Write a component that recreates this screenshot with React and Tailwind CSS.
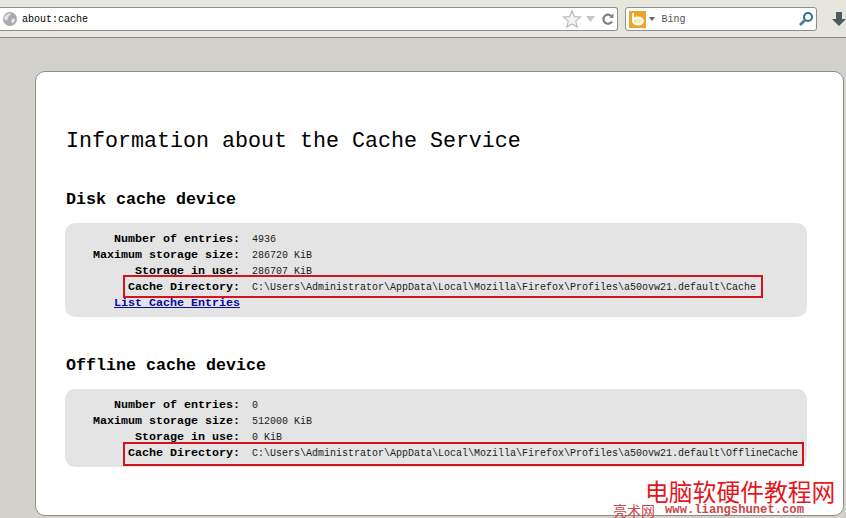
import React from "react";

const mono = "font-['Liberation_Mono',monospace]";

function Row({ label, value, boxed }) {
  return (
    <div className="relative flex h-4 items-center">
      <span className="mt-[2px] w-[175px] text-right text-[11.67px] font-bold text-black">{label}</span>
      <span className="ml-3 whitespace-nowrap text-[#222]">{value}</span>
      {boxed && <div className={`absolute left-[58px] border-2 border-[#d4141c] ${boxed}`} />}
    </div>
  );
}

function Device({ title, rows, link, height }) {
  return (
    <section>
      <h2 className="text-[16.67px] leading-5 font-bold text-black">{title}</h2>
      <div className={`mt-[13px] -ml-px w-[742px] rounded-[10px] bg-[#e4e4e4] pt-[8px] text-[10px] ${height}`}>
        {rows.map((r) => (
          <Row key={r.label} {...r} />
        ))}
        {link && (
          <div className="flex h-4 items-center pl-[49px]">
            <a className="mt-[2px] text-[11.67px] font-bold text-[#0a0a9c] underline">{link}</a>
          </div>
        )}
      </div>
    </section>
  );
}

export default function App() {
  const base = "C:\\Users\\Administrator\\AppData\\Local\\Mozilla\\Firefox\\Profiles\\a50ovw21.default\\";
  return (
    <div className={`relative h-[518px] w-[846px] overflow-hidden bg-[#d3d1cb] ${mono}`}>
      {/* browser toolbar */}
      <div className="flex h-[38px] items-start border-b border-[#8c8b85] bg-[#e6e5de] pt-[7px]">
        <div className="flex h-[24px] w-[620px] items-center rounded-r-[3px] border-y border-r border-[#8f8f8b] bg-white">
          <svg width="16" height="16" viewBox="0 0 16 16" className="ml-[2px]">
            <circle cx="8" cy="8" r="7" fill="#a9abad" />
            <path d="M3 5c2-2 4-3 6-2-1 2-3 2-3 4s-2 3-3 2-1-3 0-4zM10 8c2-1 3 0 3 1s-2 4-3 3-1-3 0-4z" fill="#e3e4e5" />
          </svg>
          <span className="ml-1 text-[10px] text-black">about:cache</span>
          <div className="ml-auto flex items-center pr-[4px]">
            <svg width="20" height="20" viewBox="0 0 20 20">
              <path d="M10 2l2.4 5.6 6 .5-4.6 4 1.4 6L10 15l-5.2 3.1 1.4-6-4.6-4 6-.5z" fill="#f4f4f2" stroke="#b9bbbb" strokeWidth="1.2" />
            </svg>
            <svg width="11" height="8" viewBox="0 0 11 8" className="ml-[3px]">
              <path d="M1 1h9L5.5 7z" fill="#c4c6c6" />
            </svg>
            <svg width="14" height="14" viewBox="0 0 14 14" className="ml-[5px] mr-[-2px]">
              <path d="M11 9.5A4.6 4.6 0 1 1 10.4 4" fill="none" stroke="#7b8184" strokeWidth="2.2" />
              <path d="M8 5.5L12.5 1.5v4.5z" fill="#7b8184" />
            </svg>
          </div>
        </div>
        <div className="ml-[7px] flex h-[24px] w-[192px] items-center rounded-[3px] border border-[#8f8f8b] bg-white">
          <svg width="17" height="17" viewBox="0 0 17 17" className="ml-[3px]">
            <rect width="17" height="17" fill="#eaa52c" />
            <ellipse cx="9" cy="10" rx="5" ry="3.6" fill="#fbe9a8" stroke="#fff" strokeWidth="2" />
            <rect x="3" y="2" width="2" height="9" fill="#fff" />
          </svg>
          <svg width="6" height="4" viewBox="0 0 6 4" className="ml-[3px]">
            <path d="M0 0h6L3 4z" fill="#666" />
          </svg>
          <span className="ml-[6px] text-[10px] text-[#555]">Bing</span>
          <svg width="16" height="16" viewBox="0 0 16 16" className="mr-[2px] ml-auto">
            <circle cx="10" cy="6" r="4" fill="none" stroke="#2f6f8c" strokeWidth="2" />
            <path d="M7 9l-5 5" stroke="#4d7f93" strokeWidth="2.6" />
          </svg>
        </div>
        <svg width="14" height="16" viewBox="0 0 14 16" className="mt-[4px] ml-[15px] shrink-0">
          <path d="M4 1h6v7h4l-7 7-7-7h4z" fill="#4e5a62" />
        </svg>
      </div>

      {/* about:cache page */}
      <div className="mt-[33px] ml-[35px] h-[445px] w-[809px] rounded-[10px] border border-[#8e8d88] bg-white pl-[30px]">
        <h1 className="mt-[56px] text-[21.67px] leading-[28px] text-black">Information about the Cache Service</h1>
        <div className="mt-[34px]">
          <Device
            title="Disk cache device"
            height="h-[94px]"
            link="List Cache Entries"
            rows={[
              { label: "Number of entries:", value: "4936" },
              { label: "Maximum storage size:", value: "286720 KiB" },
              { label: "Storage in use:", value: "286707 KiB" },
              { label: "Cache Directory:", value: base + "Cache", boxed: "-top-[4px] h-[23px] w-[640px]" },
            ]}
          />
        </div>
        <div className="mt-[39px]">
          <Device
            title="Offline cache device"
            height="h-[78px]"
            rows={[
              { label: "Number of entries:", value: "0" },
              { label: "Maximum storage size:", value: "512000 KiB" },
              { label: "Storage in use:", value: "0 KiB" },
              { label: "Cache Directory:", value: base + "OfflineCache", boxed: "-top-[3px] h-[24px] w-[681px]" },
            ]}
          />
        </div>
      </div>

      {/* watermark */}
      <div className="absolute top-[480px] left-[645px] font-['Noto_Sans_CJK_SC',sans-serif] text-[23.8px] leading-[22px] whitespace-nowrap text-[#e3161e]">
        电脑软硬件教程网
      </div>
      <div className="absolute top-[503px] left-[613px] flex items-center whitespace-nowrap text-[#c9474a]">
        <span className="font-['Noto_Sans_CJK_SC',sans-serif] text-[14px] leading-[14px]">亮术网</span>
        <span className="ml-[10px] font-['Liberation_Mono',monospace] text-[12.2px] leading-[14px] font-bold">www.liangshunet.com</span>
      </div>
    </div>
  );
}
